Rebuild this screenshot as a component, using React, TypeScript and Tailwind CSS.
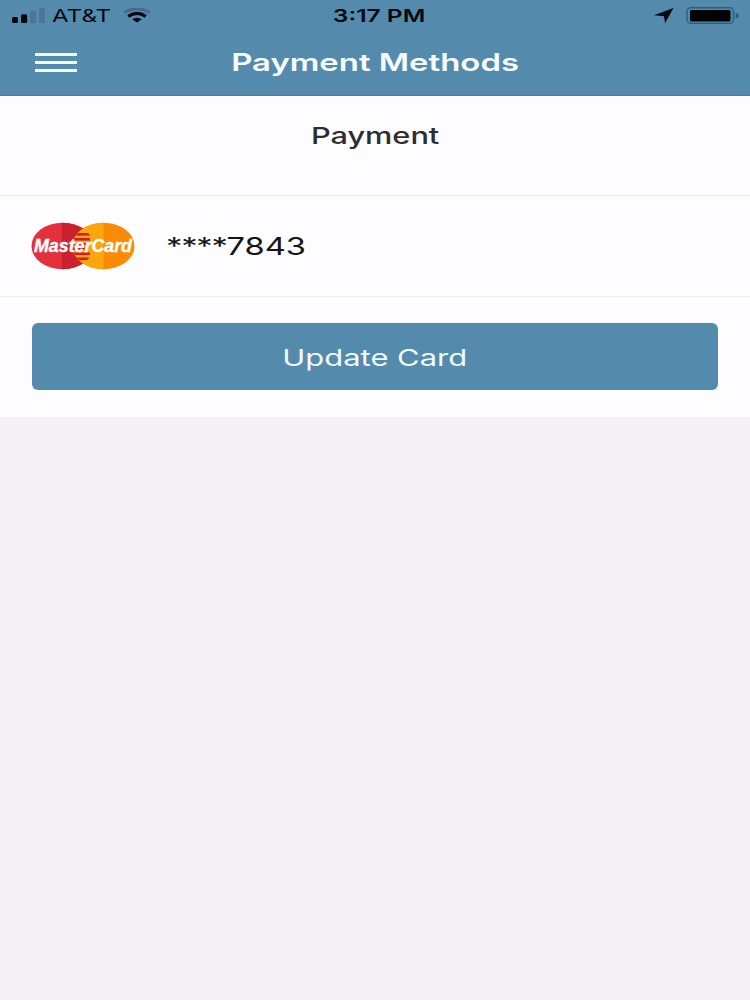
import React from "react";

const card = { brand: "MasterCard", mask: "****", lastFour: "7843" };

function SignalBars() {
  return (
    <svg width="34" height="16" viewBox="0 0 34 16">
      <rect x="0" y="9" width="6" height="6" rx="1.5" fill="#05090d" />
      <rect x="9" y="6.2" width="6.2" height="8.8" rx="1.5" fill="#05090d" />
      <rect x="18" y="3" width="6" height="12" rx="1.5" fill="#4b7797" />
      <rect x="27" y="0" width="6" height="15" rx="1.5" fill="#4b7797" />
    </svg>
  );
}

function WifiIcon() {
  return (
    <svg width="28" height="16" viewBox="0 0 28 16">
      <path d="M1.2 4.5 Q14 -3.1 26.8 4.5" fill="none" stroke="#446f8c" strokeWidth="3" />
      <path d="M5.2 8.3 Q14 2.5 22.8 8.3" fill="none" stroke="#05090d" strokeWidth="3.2" />
      <path d="M9.2 11.3 Q14 8.1 18.8 11.3 L14 14.5 Z" fill="#05090d" />
    </svg>
  );
}

function MasterCardLogo() {
  return (
    <svg width="104" height="48" viewBox="0 0 104 48" className="shrink-0">
      <defs>
        <clipPath id="orangeCircle">
          <ellipse cx="72.5" cy="24" rx="31" ry="23.2" />
        </clipPath>
        <clipPath id="redCircle">
          <ellipse cx="31.5" cy="24" rx="31" ry="23.2" />
        </clipPath>
      </defs>
      <ellipse cx="31.5" cy="24" rx="31" ry="23.2" fill="#e3303b" />
      <g clipPath="url(#redCircle)">
        <rect x="31" y="0" width="40" height="48" fill="#cb2030" />
      </g>
      <ellipse cx="72.5" cy="24" rx="31" ry="23.2" fill="#fb8b06" />
      <g clipPath="url(#orangeCircle)">
        <rect x="40" y="0" width="32.5" height="48" fill="#fda50c" />
        <g clipPath="url(#redCircle)" fill="#cb2030">
          <rect x="45" y="11" width="14" height="2.6" />
          <rect x="43" y="16" width="16" height="2.6" />
          <rect x="42" y="21" width="14" height="2.6" />
          <rect x="42" y="25.5" width="14" height="2.6" />
          <rect x="43" y="30.5" width="16" height="2.6" />
          <rect x="45" y="35.5" width="14" height="2.6" />
        </g>
      </g>
      <text
        x="3"
        y="29.8"
        textLength="98"
        lengthAdjust="spacingAndGlyphs"
        fontFamily="'Liberation Sans', sans-serif"
        fontSize="17.5"
        fontWeight="bold"
        fontStyle="italic"
        fill="#fff"
        stroke="#fff"
        strokeWidth="0.4"
      >
        {card.brand}
      </text>
    </svg>
  );
}

function StatusBar() {
  return (
    <div className="grid h-[30px] grid-cols-3 items-center pl-3 pr-2.5 text-[17.5px] leading-[30px] text-[#05090d]">
      <div className="flex items-center">
        <SignalBars />
        <span className="ml-[6px] inline-block w-[66px] origin-left scale-x-[1.38] pt-px">AT&amp;T</span>
        <span className="ml-[5px]"><WifiIcon /></span>
      </div>
      <div className="text-center">
        <span className="ml-[6px] inline-block scale-x-[1.4] pt-px font-semibold">3:17 PM</span>
      </div>
      <div className="flex items-center justify-end gap-3">
        <svg width="21" height="16" viewBox="0 0 21 16">
          <path d="M20.5 0 L1 7.2 L11 8.2 L12 15.2 Z" fill="#05090d" />
        </svg>
        <svg width="54" height="18" viewBox="0 0 54 18">
          <rect x="1" y="0.8" width="46.5" height="15.6" rx="4" fill="none" stroke="#315c78" strokeWidth="1.4" />
          <rect x="4" y="3" width="40.5" height="11.4" rx="1.5" fill="#020304" />
          <path d="M49.6 5.6 Q53 7 53 8.7 Q53 10.4 49.6 11.8 Z" fill="#315c78" />
        </svg>
      </div>
    </div>
  );
}

function App() {
  return (
    <div className="min-h-screen bg-[#f3f1f5] font-['Inter',sans-serif]">
      <header className="h-[96px] border-b border-[#4b7f9c] bg-[#548bac]">
        <StatusBar />
        <div className="grid h-[65px] grid-cols-[1fr_auto_1fr] items-center">
          <button className="ml-[35px] flex w-[42px] flex-col gap-[5px]">
            <span className="h-[3px] w-full bg-[#f4fbff]" />
            <span className="h-[3px] w-full bg-[#f4fbff]" />
            <span className="h-[3px] w-full bg-[#f4fbff]" />
          </button>
          <h1 className="scale-x-[1.37] pt-px text-[24px] font-semibold text-[#f6fbff]">Payment Methods</h1>
        </div>
      </header>
      <main className="bg-[#fdfcfe]">
        <section className="h-[100px] border-b border-[#e9e8eb] pt-[22px] text-center">
          <h2 className="inline-block scale-x-[1.335] text-[23px] leading-9 font-medium text-[#2e2d32]">Payment</h2>
        </section>
        <section className="flex h-[101px] items-center border-b border-[#efeef1] pl-[31px]">
          <MasterCardLogo />
          <span className="ml-[31px] inline-block origin-left scale-x-[1.36] pt-0.5 text-[24px] text-[#151517]">
            <span className="tracking-[-0.9px]">{card.mask}</span>
            {card.lastFour}
          </span>
        </section>
        <section className="px-8 pt-[26px] pb-[27px]">
          <button className="h-[67px] w-full rounded-[6px] bg-[#548bac] pt-[3px] text-[23px] text-[#f1faff]">
            <span className="inline-block scale-x-[1.345]">Update Card</span>
          </button>
        </section>
      </main>
    </div>
  );
}

export default App;
